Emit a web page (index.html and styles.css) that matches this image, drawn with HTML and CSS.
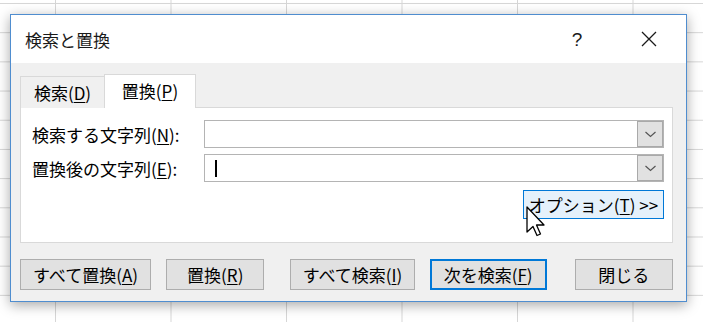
FILE: index.html
```html
<!DOCTYPE html>
<html lang="ja">
<head>
    <meta charset="UTF-8">
    <meta name="viewport" content="width=device-width, initial-scale=1.0">
    <title>検索と置換</title>
    <link rel="stylesheet" href="styles.css">
</head>
<body>
    <div class="dialog">
        <div class="titlebar">
            <span class="title">検索と置換</span>
            <span class="help">?</span>
            <span class="close">
                <svg width="16" height="16" viewBox="0 0 16 16"><path d="M1 1 L15 15 M15 1 L1 15" stroke="#1a1a1a" stroke-width="1.3" fill="none"/></svg>
            </span>
        </div>

        <div class="content">
            <div class="tabs">
                <div class="tab">検索(<u>D</u>)</div>
                <div class="tab active">置換(<u>P</u>)</div>
            </div>

            <div class="panel">
                <div class="row">
                    <label>検索する文字列(<u>N</u>):</label>
                    <div class="combo">
                        <div class="combo-field"></div>
                        <div class="combo-btn">
                            <svg width="11" height="7" viewBox="0 0 11 7"><polyline points="0.5,1 5.5,5.5 10.5,1" stroke="#555" stroke-width="1.2" fill="none"/></svg>
                        </div>
                    </div>
                </div>
                <div class="row">
                    <label>置換後の文字列(<u>E</u>):</label>
                    <div class="combo">
                        <div class="combo-field"><span class="caret"></span></div>
                        <div class="combo-btn">
                            <svg width="11" height="7" viewBox="0 0 11 7"><polyline points="0.5,1 5.5,5.5 10.5,1" stroke="#555" stroke-width="1.2" fill="none"/></svg>
                        </div>
                    </div>
                </div>
                <div class="options-row">
                    <button class="options">オプション(<u>T</u>) &gt;&gt;</button>
                </div>
            </div>

            <div class="actions">
                <button class="btn btn-replace-all">すべて置換(<u>A</u>)</button>
                <button class="btn btn-replace">置換(<u>R</u>)</button>
                <button class="btn btn-find-all">すべて検索(<u>I</u>)</button>
                <button class="btn btn-find-next focused">次を検索(<u>F</u>)</button>
                <button class="btn btn-close">閉じる</button>
            </div>
        </div>

        <!-- mouse pointer over the options button -->
        <svg class="pointer" width="20" height="32" viewBox="0 0 20 32">
            <path d="M1 1 L1 26 L7 20.5 L11 29.5 L14.5 28 L10.5 19 L18 19 Z" fill="#fff" stroke="#000" stroke-width="1.3" stroke-linejoin="round"/>
        </svg>
    </div>
</body>
</html>
```

FILE: styles.css
```css
body {
    margin: 0;
    width: 703px;
    height: 322px;
    padding: 14px 0 0 10px;
    box-sizing: border-box;
    overflow: hidden;
    background-color: #fff;
    background-image:
        linear-gradient(to right, #d6d6d6 1px, transparent 1px),
        linear-gradient(to bottom, #d6d6d6 1px, transparent 1px);
    background-size: 115.5px 29.2px;
    background-position: 55px 3px;
    font-family: "Noto Sans CJK JP", sans-serif;
    font-size: 17px;
    color: #000;
}
u {
    text-underline-offset: 2px;
}
.dialog {
    position: relative;
    width: 677px;
    height: 288px;
    box-sizing: border-box;
    border: 1px solid #4f8dcf;
    background: #f0f0f0;
    box-shadow: 0 3px 12px rgba(0, 0, 0, 0.35);
}
.titlebar {
    height: 48px;
    display: flex;
    align-items: center;
    background: #fff;
    padding-left: 14px;
    line-height: 1;
}
.title {
    color: #1a1a1a;
}
.help {
    margin-left: auto;
    width: 40px;
    text-align: center;
    font-family: "Liberation Sans", sans-serif;
    font-size: 19px;
    color: #1a1a1a;
}
.close {
    width: 46px;
    margin-left: 29px;
    margin-right: 14px;
    display: flex;
    justify-content: center;
}
.content {
    padding: 11px 13px 0 9px;
}
.tabs {
    display: flex;
    align-items: flex-end;
    height: 34px;
    margin-bottom: -1px;
    position: relative;
    z-index: 1;
}
.tab {
    width: 85px;
    height: 32px;
    box-sizing: border-box;
    border: 1px solid #d9d9d9;
    border-bottom: none;
    background: #f0f0f0;
    display: flex;
    align-items: center;
    justify-content: center;
    line-height: 1;
}
.tab.active {
    width: 92px;
    height: 34px;
    margin-left: -1px;
    background: #fff;
    padding-bottom: 2px;
}
.panel {
    height: 136px;
    box-sizing: border-box;
    border: 1px solid #d9d9d9;
    background: #fff;
    padding: 12px 8px 0 11px;
}
.row {
    display: flex;
    align-items: center;
    height: 28px;
    margin-bottom: 6px;
}
.row label {
    width: 172px;
    line-height: 1;
}
.combo {
    flex: 1;
    height: 28px;
    box-sizing: border-box;
    border: 1px solid #b4b4b4;
    display: flex;
}
.combo-field {
    flex: 1;
    display: flex;
    align-items: center;
}
.caret {
    width: 1.5px;
    height: 17px;
    margin-left: 10px;
    background: #000;
}
.combo-btn {
    width: 26px;
    box-sizing: border-box;
    border: 1px solid #a9a9a9;
    background: #e1e1e1;
    display: flex;
    align-items: center;
    justify-content: center;
}
.options-row {
    display: flex;
    justify-content: flex-end;
    margin-top: 8px;
}
.options {
    width: 141px;
    height: 29px;
    padding: 0;
    border: 1px solid #0078d7;
    background: #e5f1fb;
    font-family: inherit;
    font-size: 17px;
    line-height: 1;
    color: #000;
}
.actions {
    display: flex;
    margin-top: 16px;
}
.btn {
    height: 31px;
    padding: 0;
    border: 1px solid #adadad;
    background: #e1e1e1;
    font-family: inherit;
    font-size: 17px;
    line-height: 1;
    color: #000;
}
.btn-replace-all {
    width: 132px;
}
.btn-replace {
    width: 99px;
    margin-left: 15px;
}
.btn-find-all {
    width: 125px;
    margin-left: 26px;
}
.btn-find-next {
    width: 118px;
    margin-left: 15px;
}
.btn-close {
    width: 99px;
    margin-left: 28px;
}
.btn.focused {
    border: 2px solid #0078d7;
}
.pointer {
    position: absolute;
    left: 515px;
    top: 191px;
}
```
